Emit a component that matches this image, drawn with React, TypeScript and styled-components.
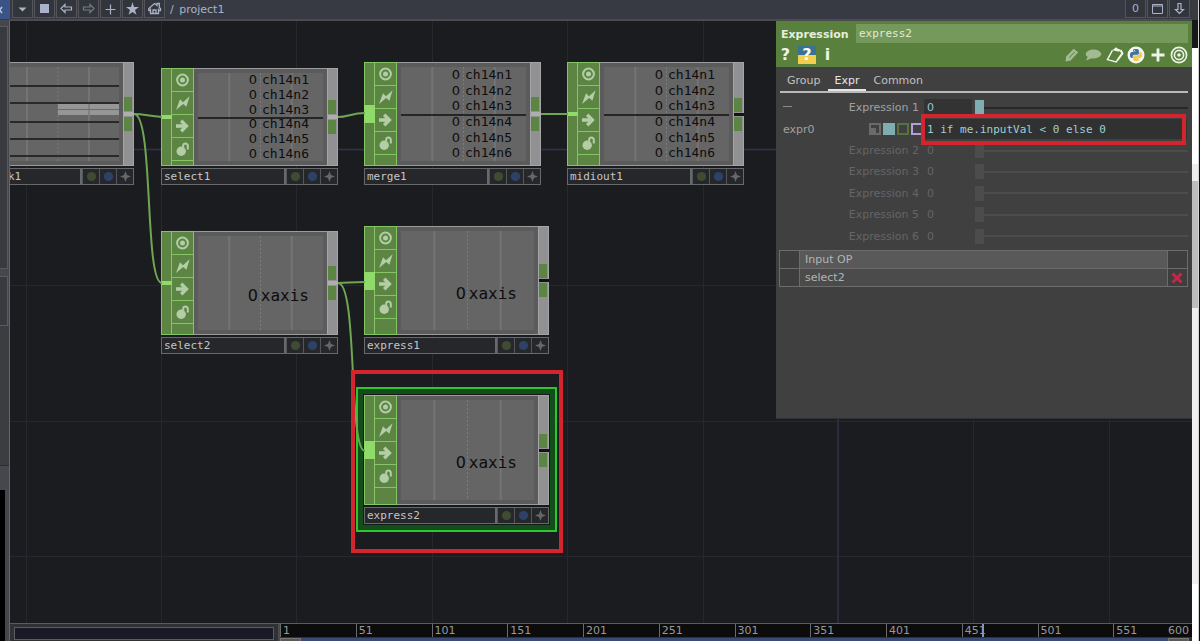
import React from "react";
import styled, { createGlobalStyle, css } from "styled-components";

const MONO = '"DejaVu Sans Mono", "Liberation Mono", monospace';
const SANS = '"DejaVu Sans", "Liberation Sans", sans-serif';

const GlobalStyle = createGlobalStyle`
  * { box-sizing: border-box; }
  body { margin: 0; background: #1b1c20; font-family: ${SANS}; font-size: 11px; }
  button, input { font: inherit; color: inherit; margin: 0; padding: 0; border: 0; border-radius: 0; background: none; outline: none; min-width: 0; }
  svg { display: block; }
`;

const Shell = styled.div`
  display: flex;
  height: 100vh;
  overflow: hidden;
`;

/* ---------- left pane edge ---------- */

const LeftEdge = styled.aside`
  flex: 0 0 10px;
  display: flex;
  flex-direction: column;
  background: #46474c;
  border-right: 1px solid #65666a;
`;

const EdgeTab = styled.button`
  height: 20px;
  margin-right: -1px;
  background: #3b5488;
  border-bottom: 1px solid #2b3c60;
  svg { width: 9px; height: 16px; }
`;

const EdgePanel = styled.div<{ $height: number; $gap: number }>`
  height: ${(p) => p.$height}px;
  margin-top: ${(p) => p.$gap}px;
  margin-right: 1px;
  background: #383a40;
  border: solid #595a5f;
  border-width: 1px 1px 1px 0;
`;

const EdgeFill = styled.div`
  height: 140px;
  background: #3c3d41;
  border-bottom: 1px solid #2c2d30;
`;

const EdgeBlank = styled.div`
  flex: 1;
  margin: 24px 4px 0 0;
  background: #000;
`;

/* ---------- main column ---------- */

const Main = styled.main`
  flex: 1;
  min-width: 0;
  display: flex;
  flex-direction: column;
`;

const Toolbar = styled.header`
  flex: 0 0 21px;
  display: flex;
  align-items: flex-start;
  gap: 1px;
  padding: 0 2px;
  background: #373a43;
  border-bottom: 2px solid #4b4c50;
  color: #a9b2c8;
`;

const ToolButton = styled.button<{ $dim?: boolean }>`
  width: 21px;
  height: 18px;
  display: flex;
  align-items: center;
  justify-content: center;
  background: #33353d;
  border: 1px solid #54555b;
  border-top: 0;
  color: ${(p) => (p.$dim ? "#747a88" : "#a9b2c8")};
  svg { width: 15px; height: 15px; }
`;

const Path = styled.nav`
  flex: 1;
  padding-left: 4px;
  line-height: 19px;
  a { color: inherit; text-decoration: none; margin-left: 2px; }
`;

/* ---------- network canvas ---------- */

const Stage = styled.section`
  position: relative;
  flex: 1;
  min-height: 0;
  overflow: hidden;
  background: #1b1c20;
`;

const Layer = styled.svg`
  position: absolute;
  inset: 0;
  width: 100%;
  height: 100%;
  pointer-events: none;
`;

const NodeFrame = styled.article<{ $x: number; $y: number; $w: number }>`
  position: absolute;
  left: ${(p) => p.$x}px;
  top: ${(p) => p.$y}px;
  width: ${(p) => p.$w}px;
`;

const Selection = styled.div`
  position: absolute;
  inset: -8px;
  background: #134d19;
  border: 2px solid #2cc62f;
  &::after {
    content: "";
    position: absolute;
    inset: 5px;
    background: #15191a;
  }
`;

const NodeBody = styled.div<{ $height: number }>`
  position: relative;
  display: flex;
  height: ${(p) => p.$height}px;
  background: #5b5b5b;
  border: 1px solid #9b9b9b;
  border-width: 1px 0;
`;

const InputRail = styled.div<{ $h: number }>`
  width: 11px;
  margin: -1px 0;
  display: flex;
  align-items: center;
  background: #5c8543;
  border: 1px solid #83c663;
  &::before {
    content: "";
    flex: 1;
    height: ${(p) => p.$h}px;
    margin-right: -1px;
    margin-left: -1px;
    background: #90da69;
  }
`;

const FlagColumn = styled.div`
  width: 22px;
  margin: -1px 0;
  display: flex;
  flex-direction: column;
  background: #5c8543;
  border: solid #83c663;
  border-width: 1px 1px 1px 0;
  overflow: hidden;
`;

const Flag = styled.button`
  flex: 0 0 23px;
  display: flex;
  align-items: center;
  justify-content: center;
  border-bottom: 1px solid #83c663;
  color: #b3cda6;
  svg { width: 16px; height: 16px; }
`;

const Screen = styled.div`
  position: relative;
  flex: 1;
  margin: 4px;
  display: flex;
  flex-direction: column;
  background: #656565;
  svg { position: absolute; inset: 0; width: 100%; height: 100%; }
`;

const Channel = styled.div<{ $large?: boolean; $wide?: boolean }>`
  position: relative;
  flex: 1;
  display: flex;
  align-items: center;
  justify-content: flex-end;
  gap: 5px;
  padding-right: ${(p) => (p.$wide ? 17 : 14)}px;
  color: #0d0d0d;
  font: 13px/14px ${MONO};
  ${(p) =>
    p.$large &&
    css`
      padding-top: 26px;
      font-size: 16px;
      gap: 3px;
    `}
`;

const Value = styled.span`
  font-family: ${SANS};
`;

const OutputRail = styled.div`
  width: 11px;
  margin: -1px 0;
  display: flex;
  flex-direction: column;
  justify-content: center;
  background: #919193;
  border: 1px solid #a5a5a7;
`;

const Port = styled.div`
  height: 14px;
  width: 8px;
  background: #5c8543;
`;

const PortGap = styled.div<{ $open?: boolean }>`
  height: ${(p) => (p.$open ? 3 : 4)}px;
  margin: 1px -1px 1px 0;
  background: ${(p) => (p.$open ? "#121314" : "#aeaeb0")};
`;

const NodeFooter = styled.div`
  position: relative;
  display: flex;
  margin-top: 2px;
  height: 17px;
  background: #26272a;
  border: 1px solid #68696b;
`;

const NodeName = styled.div`
  flex: 1;
  padding-left: 2px;
  line-height: 16px;
  font-family: ${MONO};
  color: #c6c6c6;
  border-right: 2px solid #68696b;
`;

const FooterCell = styled.button`
  width: 17px;
  display: flex;
  align-items: center;
  justify-content: center;
  border-left: 1px solid #55565a;
  svg { width: 11px; height: 11px; }
`;

const NodeMark = styled.div`
  position: absolute;
  left: 341px;
  top: 349px;
  width: 212px;
  height: 183px;
  border: 4px solid #d3252d;
`;

/* ---------- parameter panel ---------- */

const Panel = styled.section`
  position: absolute;
  top: 0;
  right: 0;
  width: 416px;
  height: 398px;
  background: #404040;
  border-bottom: 1px solid #2f3033;
`;

const PanelHead = styled.div`
  display: grid;
  grid-template-rows: 19px 24px;
  padding: 3px 4px 0;
  height: 46px;
  background: #5a803e;
`;

const HeadRow = styled.div`
  display: flex;
  align-items: center;
`;

const OpType = styled.label`
  width: 76px;
  padding: 2px 0 0 1px;
  font-weight: bold;
  color: #e4eedd;
`;

const OpName = styled.input`
  && {
    flex: 1;
    height: 19px;
    padding: 0 3px;
    background: #75995b;
    color: #e0ebd8;
    font-family: ${MONO};
  }
`;

const HeadTools = styled.div<{ $gap: number }>`
  display: flex;
  align-items: center;
  gap: ${(p) => p.$gap}px;
`;

const HeadButton = styled.button<{ $w: number; $dim?: boolean }>`
  && {
    width: ${(p) => p.$w}px;
    height: 20px;
    display: flex;
    align-items: center;
    justify-content: center;
    color: #edf5e8;
    opacity: ${(p) => (p.$dim ? 0.5 : 1)};
    font: bold 16px/20px ${SANS};
  }
  svg { flex: none; }
`;

const Spacer = styled.div`
  flex: 1;
`;

const Tabs = styled.div`
  display: flex;
  align-items: flex-end;
  height: 26px;
  margin: 0 4px;
  border-bottom: 2px solid #b9b9b9;
`;

const Tab = styled.button<{ $on?: boolean }>`
  && {
    height: 19px;
    padding: 0 7px;
    line-height: 17px;
    color: ${(p) => (p.$on ? "#e6e6e6" : "#c0c0c0")};
    border-bottom: 2px solid ${(p) => (p.$on ? "#e6e6e6" : "transparent")};
  }
`;

const Params = styled.div`
  display: flex;
  flex-direction: column;
  height: 150px;
  margin: 4px 4px 0;
`;

const ParamRow = styled.div<{ $off?: boolean }>`
  flex: 1;
  display: grid;
  grid-template-columns: 139px 1fr;
  column-gap: 5px;
  align-items: center;
  color: ${(p) => (p.$off ? "#656565" : "#a0a0a0")};
`;

const LabelCell = styled.div`
  display: flex;
  align-items: center;
  justify-content: space-between;
  padding-left: 3px;
`;

const Collapse = styled.button`
  width: 9px;
  height: 11px;
  svg { width: 9px; height: 11px; }
`;

const ParamLabel = styled.label`
  margin-left: auto;
`;

const ValueCell = styled.div`
  display: flex;
  align-items: center;
  height: 20px;
`;

const NumberField = styled.input<{ $off?: boolean }>`
  && {
    width: 48px;
    height: 18px;
    margin-right: 3px;
    padding-left: 3px;
    background: ${(p) => (p.$off ? "transparent" : "#333333")};
    color: ${(p) => (p.$off ? "#656565" : "#96c5c8")};
  }
`;

const Slider = styled.input<{ $off?: boolean }>`
  && {
    flex: 1;
    height: 15px;
    appearance: none;
    background: linear-gradient(${(p) => (p.$off ? "#4c4c4c" : "#272727")}, ${(p) => (p.$off ? "#4c4c4c" : "#272727")}) center / 100% 2px no-repeat;
  }
  &::-webkit-slider-thumb {
    appearance: none;
    width: 9px;
    height: 15px;
    border-radius: 0;
    background: ${(p) => (p.$off ? "#4c4c4c" : "#7faeb2")};
  }
`;

const Modes = styled.div`
  display: flex;
  gap: 2px;
  margin-right: -4px;
`;

const Mode = styled.button<{ $line: string; $fill: string }>`
  && {
    width: 12px;
    height: 12px;
    border: 2px solid ${(p) => p.$line};
    background: ${(p) => p.$fill};
  }
`;

const ExpressionCell = styled.div`
  position: relative;
  display: flex;
`;

const ExpressionInput = styled.input`
  && {
    flex: 1;
    height: 20px;
    margin-right: 1px;
    padding-left: 3px;
    background: #313131;
    color: #9fcfd0;
    font-family: ${MONO};
  }
`;

const ExpressionMark = styled.div`
  position: absolute;
  inset: -5px 2px -6px -3px;
  border: 4px solid #d3252d;
  pointer-events: none;
`;

const InputTable = styled.table`
  width: calc(100% - 7px);
  margin: 3px 4px 0 3px;
  border-collapse: collapse;
  table-layout: fixed;
  color: #b4b4b4;
  th, td {
    height: 18px;
    padding: 0;
    border: 1px solid #6c6c6c;
    font-weight: normal;
    text-align: left;
    line-height: 16px;
    background: #3e3e3e;
  }
  th:nth-child(1) { width: 20px; }
  th:nth-child(3) { width: 20px; }
  th:nth-child(2) { padding-left: 5px; background: #595959; }
  td:nth-child(2) { padding-left: 5px; background: #4b4b4b; }
`;

const RemoveButton = styled.button`
  display: block;
  width: 18px;
  height: 16px;
  svg { width: 18px; height: 16px; }
`;

/* ---------- timeline ---------- */

const Timeline = styled.footer`
  flex: 0 0 18px;
  display: flex;
  overflow: hidden;
  background: #303135;
  border-top: 1px solid #5a5b5e;
`;

const TimeInfo = styled.div`
  flex: 0 0 270px;
  padding: 3px 4px 0;
  border-right: 2px solid #4a4b4f;
`;

const TimeInfoBox = styled.div`
  height: 13px;
  background: #1a1a26;
  border: 1px solid #5c5d61;
`;

const TimeBody = styled.div`
  flex: 1;
  min-width: 0;
  display: flex;
  flex-direction: column;
`;

const Ruler = styled.div`
  position: relative;
  display: flex;
  height: 13px;
  background: #0c0c0d;
  color: #98989a;
  line-height: 13px;
`;

const Tick = styled.div`
  flex: 50 0 0;
  padding-left: 2px;
  border-left: 1px solid #6b6b6d;
  &:last-of-type {
    display: flex;
    justify-content: space-between;
    padding-right: 3px;
  }
`;

const Playhead = styled.div`
  position: absolute;
  left: 77%;
  top: 0;
  width: 2px;
  height: 13px;
  background: #7f96bd;
`;

const RangeBar = styled.div`
  display: flex;
  justify-content: space-between;
  height: 4px;
  margin: 1px 3px 0 0;
  background: #384a75;
`;

const RangeHandle = styled.button`
  && {
    width: 21px;
    height: 4px;
    background: #5a5a5a;
    border: 1px solid #77777a;
    border-bottom: 0;
  }
`;

/* ---------- window behind, right side ---------- */

const RightEdge = styled.aside`
  flex: 0 0 8px;
  display: flex;
  flex-direction: column;
  border-right: 1px solid #0a0a0a;
  background: #f4f4f4;
`;

const EdgeBlock = styled.div<{ $h: number; $c: string }>`
  height: ${(p) => p.$h}px;
  background: ${(p) => p.$c};
  border-right: 1px solid #d4d4d4;
`;

/* ---------- drawings ---------- */

const TargetIcon = () => (
  <svg viewBox="0 0 16 16" fill="none" stroke="currentColor">
    <circle cx="7.5" cy="8" r="5.4" strokeWidth="2" />
    <circle cx="7.5" cy="8" r="2.5" fill="currentColor" stroke="none" />
  </svg>
);
const BoltIcon = () => (
  <svg viewBox="0 0 16 16" fill="currentColor">
    <path d="M14.6 1.2 11.4 11.8 8.2 9 1 15 5 4.200 8 7.200z" />
  </svg>
);
const ArrowIcon = () => (
  <svg viewBox="0 0 16 16" fill="none" stroke="currentColor">
    <path d="M1 8h10" strokeWidth="3.600" />
    <path d="M6.200 2.800 11.400 8l-5.200 5.200" strokeWidth="3.400" />
  </svg>
);
const BombIcon = () => (
  <svg viewBox="0 0 16 16" fill="none" stroke="currentColor">
    <circle cx="6.2" cy="10.2" r="4.7" fill="currentColor" stroke="none" />
    <path d="M8.2 6.600V4.800a2.300 2.300 0 0 1 4.600 0v3.800" strokeWidth="2" />
  </svg>
);
const DotIcon = ({ color }: { color: string }) => (
  <svg viewBox="0 0 11 11">
    <circle cx="5.5" cy="5.5" r="4.6" fill={color} />
  </svg>
);
const SparkIcon = () => (
  <svg viewBox="0 0 11 11" fill="#66676a">
    <path d="M5.5 0 7 4 11 5.500 7 7 5.500 11 4 7 0 5.500 4 4z" />
  </svg>
);

const PY_TOP =
  "M14.25.18l.9.2.73.26.59.3.45.32.34.34.25.34.16.33.1.3.04.26.02.2-.01.13V8.5l-.05.63-.13.55-.21.46-.26.38-.3.31-.33.25-.35.19-.35.14-.33.1-.3.07-.26.04-.21.02H8.77l-.69.05-.59.14-.5.22-.41.27-.33.32-.27.35-.2.36-.15.37-.1.35-.07.32-.04.27-.02.21v3.06H3.17l-.21-.03-.28-.07-.32-.12-.35-.18-.36-.26-.36-.36-.35-.46-.32-.59-.28-.73-.21-.88-.14-1.05-.05-1.23.06-1.22.16-1.04.24-.87.32-.71.36-.57.4-.44.42-.33.42-.24.4-.16.36-.1.32-.05.24-.01h.16l.06.01h8.16v-.83H6.18l-.01-2.75-.02-.37.05-.34.11-.31.17-.28.25-.26.31-.23.38-.2.44-.18.51-.15.58-.12.64-.1.71-.06.77-.04.84-.02 1.27.05zm-6.3 1.98l-.23.33-.08.41.08.41.23.34.33.22.41.09.41-.09.33-.22.23-.34.08-.41-.08-.41-.23-.33-.33-.22-.41-.09-.41.09z";
const PY_BOTTOM =
  "M21.1 6.11l.28.06.32.12.35.18.36.27.36.35.35.47.32.59.28.73.21.88.14 1.04.05 1.23-.06 1.23-.16 1.04-.24.86-.32.71-.36.57-.4.45-.42.33-.42.24-.4.16-.36.09-.32.05-.24.02-.16-.01h-8.22v.82h5.84l.01 2.76.02.36-.05.34-.11.31-.17.29-.25.25-.31.24-.38.2-.44.17-.51.15-.58.13-.64.09-.71.07-.77.04-.84.01-1.27-.04-1.07-.14-.9-.2-.73-.25-.59-.3-.45-.33-.34-.34-.25-.34-.16-.33-.1-.3-.04-.25-.02-.2.01-.13v-5.34l.05-.64.13-.54.21-.46.26-.38.3-.32.33-.24.35-.2.35-.14.33-.1.3-.06.26-.04.21-.02.13-.01h5.84l.69-.05.59-.14.5-.21.41-.28.33-.32.27-.35.2-.36.15-.36.1-.35.07-.32.04-.28.02-.21V6.07h2.09l.14.01z";

const PythonIcon = () => (
  <svg width="18" height="18" viewBox="0 0 36 36">
    <circle cx="18" cy="18" r="17" fill="#f3f6f0" />
    <g transform="translate(6 6)">
      <path d={PY_TOP} fill="#3d74a5" />
      <path d={PY_BOTTOM} fill="#f2cb4c" />
    </g>
  </svg>
);

const PythonHelp = styled.button`
  && {
    width: 18px;
    height: 18px;
    font: bold 16px/18px ${SANS};
    color: #ffffff;
    background: linear-gradient(#3a7391 50%, #f3cf4f 50%);
  }
`;

/* ---------- nodes ---------- */

type NodeProps = {
  name: string;
  x: number;
  y: number;
  wide?: boolean;
  h: number;
  channels: string[];
  large?: boolean;
  multi?: boolean;
  open?: boolean;
  selected?: boolean;
};

const Outputs = ({ open }: { open?: boolean }) => (
  <OutputRail>
    <Port />
    <PortGap $open={open} />
    <Port />
  </OutputRail>
);

const FooterCells = () => (
  <>
    <FooterCell aria-label="Viewer"><DotIcon color="#3f4c33" /></FooterCell>
    <FooterCell aria-label="Display"><DotIcon color="#2d4266" /></FooterCell>
    <FooterCell aria-label="Activate"><SparkIcon /></FooterCell>
  </>
);

const OpNode = ({ name, x, y, wide, h, channels, large, multi, open, selected }: NodeProps) => (
  <NodeFrame $x={x} $y={y} $w={wide ? 185 : 177}>
    {selected && <Selection />}
    <NodeBody $height={h}>
      <InputRail $h={multi ? 18 : 4} />
      <FlagColumn>
        <Flag aria-label="Viewer active"><TargetIcon /></Flag>
        <Flag aria-label="Cooking"><BoltIcon /></Flag>
        <Flag aria-label="Bypass"><ArrowIcon /></Flag>
        <Flag aria-label="Lock"><BombIcon /></Flag>
      </FlagColumn>
      <Screen>
        <svg>
          <line x1="25%" x2="25%" y1="0" y2="100%" stroke="#747474" strokeWidth="2" />
          <line x1="50%" x2="50%" y1="0" y2="100%" stroke="#7c7c7c" strokeDasharray="2 2" />
          <line x1="75%" x2="75%" y1="0" y2="100%" stroke="#747474" strokeWidth="2" />
          {!large && <line x1="0" x2="100%" y1="51%" y2="51%" stroke="#111" strokeWidth="1.5" />}
        </svg>
        {channels.map((c) => (
          <Channel key={c} $large={large} $wide={wide}>
            <Value>0</Value>
            <span>{c}</span>
          </Channel>
        ))}
      </Screen>
      <Outputs open={open} />
    </NodeBody>
    <NodeFooter>
      <NodeName>{name}</NodeName>
      <FooterCells />
    </NodeFooter>
  </NodeFrame>
);

const SourceName = styled(NodeName)`
  padding-left: 50px;
`;

const SourceNode = () => (
  <NodeFrame $x={-53} $y={41} $w={177}>
    <NodeBody $height={104}>
      <Screen>
        <svg>
          <line x1="66" x2="66" y1="0" y2="100%" stroke="#747474" strokeWidth="2" />
          <line x1="97" x2="97" y1="0" y2="100%" stroke="#7c7c7c" strokeDasharray="2 2" />
          <line x1="128" x2="128" y1="0" y2="100%" stroke="#747474" strokeWidth="2" />
          {[19, 36, 55, 72, 89].map((v) => (
            <line key={v} x1="0" x2="100%" y1={v} y2={v} stroke="#161616" strokeWidth="1.5" />
          ))}
          <rect x="97" y="37" width="65" height="11" fill="#969696" />
          <path d="M97 42.500h65M128 37v11" stroke="#6c6c6c" />
        </svg>
      </Screen>
      <Outputs />
    </NodeBody>
    <NodeFooter>
      <SourceName>k1</SourceName>
      <FooterCells />
    </NodeFooter>
  </NodeFrame>
);

const MIDI = ["ch14n1", "ch14n2", "ch14n3", "ch14n4", "ch14n5", "ch14n6"];

const Network = () => (
  <>
    <Layer>
      {[16, 151, 286, 422, 557, 693, 963, 1099].map((x) => (
        <line key={x} x1={x + 0.5} x2={x + 0.5} y1="0" y2="100%" stroke="#27282e" />
      ))}
      {[264, 400, 535].map((y) => (
        <line key={y} x1="0" x2="100%" y1={y + 0.5} y2={y + 0.5} stroke="#27282e" />
      ))}
      <path d="M0 128.5H1182M828 0V620" stroke="#30304f" strokeWidth="1.5" />
    </Layer>

    <SourceNode />
    <OpNode name="select1" x={151} y={47} h={98} channels={MIDI} />
    <OpNode name="merge1" x={354} y={41} h={104} channels={MIDI} multi />
    <OpNode name="midiout1" x={557} y={41} h={104} channels={MIDI} open />
    <OpNode name="select2" x={151} y={210} h={104} channels={["xaxis"]} large />
    <OpNode name="express1" x={354} y={205} h={109} channels={["xaxis"]} wide large multi open />
    <OpNode name="express2" x={354} y={374} h={110} channels={["xaxis"]} wide large multi open selected />

    <Layer fill="none" stroke="#6fa653" strokeWidth="2">
      <path d="M124 93c10 0 14 2 28 3" />
      <path d="M124 93c20 0 10 169 28 169" />
      <path d="M328 96c10 0 14-4 27-4" />
      <path d="M531 93h27" />
      <path d="M328 262c10 0 14-1 27-1" />
      <path d="M328 262c20 0 10 168 27 168" />
    </Layer>
    <NodeMark />
  </>
);

/* ---------- parameters ---------- */

const ParameterPanel = () => (
  <Panel>
    <PanelHead>
      <HeadRow>
        <OpType htmlFor="op-name">Expression</OpType>
        <OpName id="op-name" defaultValue="express2" />
      </HeadRow>
      <HeadRow>
        <HeadTools $gap={7}>
          <HeadButton $w={11}>?</HeadButton>
          <PythonHelp>?</PythonHelp>
          <HeadButton $w={9}>i</HeadButton>
        </HeadTools>
        <Spacer />
        <HeadTools $gap={4}>
          <HeadButton $w={17} $dim aria-label="Edit">
            <svg width="16" height="16" viewBox="0 0 16 16" fill="currentColor">
              <path d="M1.600 14.400 2 9.800 9.600 1.800l4.600 3.400-7.600 8.400z" />
              <path d="M5.400 10.600 10.600 5" stroke="#5a803e" strokeWidth="1" />
            </svg>
          </HeadButton>
          <HeadButton $w={18} $dim aria-label="Comment">
            <svg width="18" height="16" viewBox="0 0 18 16" fill="currentColor">
              <ellipse cx="9.5" cy="7" rx="7.8" ry="4.4" />
              <path d="M4 9 2 13.5 8.5 11z" />
            </svg>
          </HeadButton>
          <HeadButton $w={17} aria-label="Copy parameters">
            <svg width="18" height="18" viewBox="0 0 18 18" fill="none" stroke="currentColor" strokeWidth="1.4">
              <path d="M6.400 4.400 1.400 13.600l8.800 2.400 6-8.600-1.400-3.400" />
              <path d="M6 4.200 8 3 10 1.200l1.800 1.600 2.600.6-1 2.400z" fill="currentColor" stroke="none" />
              <path d="M14.600 4.200 16.400 7.400 11.600 14" strokeWidth="2" />
            </svg>
          </HeadButton>
          <HeadButton $w={18} aria-label="Python"><PythonIcon /></HeadButton>
          <HeadButton $w={17} aria-label="Add">
            <svg width="14" height="14" viewBox="0 0 14 14" stroke="currentColor" strokeWidth="2.8">
              <path d="M7 .5v13M.5 7h13" />
            </svg>
          </HeadButton>
          <HeadButton $w={18} aria-label="Target">
            <svg width="18" height="18" viewBox="0 0 18 18" fill="none" stroke="currentColor" strokeWidth="1.6">
              <circle cx="9" cy="9" r="7.6" />
              <circle cx="9" cy="9" r="4.6" />
              <circle cx="9" cy="9" r="1.8" fill="currentColor" stroke="none" />
            </svg>
          </HeadButton>
        </HeadTools>
      </HeadRow>
    </PanelHead>

    <Tabs>
      <Tab>Group</Tab>
      <Tab $on>Expr</Tab>
      <Tab>Common</Tab>
    </Tabs>

    <Params>
      <ParamRow>
        <LabelCell>
          <Collapse aria-label="Collapse">
            <svg viewBox="0 0 9 11"><path d="M0 4.5h9" stroke="#8a8a8a" /></svg>
          </Collapse>
          <ParamLabel htmlFor="expr-1">Expression 1</ParamLabel>
        </LabelCell>
        <ValueCell>
          <NumberField id="expr-1" defaultValue="0" />
          <Slider type="range" defaultValue={0} aria-label="Expression 1 slider" />
        </ValueCell>
      </ParamRow>
      <ParamRow>
        <LabelCell>
          <label htmlFor="expr0">expr0</label>
          <Modes>
            <Mode $line="#6a6a6a" $fill="linear-gradient(#6a6a6a, #6a6a6a) left bottom / 5px 5px no-repeat #404040" aria-label="Constant" />
            <Mode $line="#7faeb2" $fill="#7faeb2" aria-label="Expression" />
            <Mode $line="#55733c" $fill="#404040" aria-label="Export" />
            <Mode $line="#b39fdc" $fill="#404040" aria-label="Bind" />
          </Modes>
        </LabelCell>
        <ExpressionCell>
          <ExpressionInput id="expr0" defaultValue="1 if me.inputVal < 0 else 0" />
          <ExpressionMark />
        </ExpressionCell>
      </ParamRow>
      {[2, 3, 4, 5, 6].map((n) => (
        <ParamRow key={n} $off>
          <LabelCell>
            <ParamLabel htmlFor={`expr-${n}`}>Expression {n}</ParamLabel>
          </LabelCell>
          <ValueCell>
            <NumberField id={`expr-${n}`} defaultValue="0" $off readOnly />
            <Slider type="range" defaultValue={0} $off aria-label={`Expression ${n} slider`} />
          </ValueCell>
        </ParamRow>
      ))}
    </Params>

    <InputTable>
      <thead>
        <tr><th /><th>Input OP</th><th /></tr>
      </thead>
      <tbody>
        <tr>
          <td />
          <td>select2</td>
          <td>
            <RemoveButton aria-label="Remove input">
              <svg viewBox="0 0 18 16" stroke="#c3284a" strokeWidth="3">
                <path d="M4.500 3.500l9 9M13.500 3.500l-9 9" />
              </svg>
            </RemoveButton>
          </td>
        </tr>
      </tbody>
    </InputTable>
  </Panel>
);

const FRAMES = [1, 51, 101, 151, 201, 251, 301, 351, 401, 451, 501, 551];

export default function App() {
  return (
    <Shell>
      <GlobalStyle />
      <LeftEdge>
        <EdgeTab aria-label="Close pane">
          <svg viewBox="0 0 9 16" stroke="#b9c4dc" strokeWidth="1.6" fill="none">
            <path d="M-3 5 2 11M2 5l-5 6" />
          </svg>
        </EdgeTab>
        <EdgePanel $height={243} $gap={6} />
        <EdgePanel $height={50} $gap={7} />
        <EdgeFill />
        <EdgeBlank />
      </LeftEdge>

      <Main>
        <Toolbar>
          <ToolButton aria-label="Pane menu">
            <svg viewBox="0 0 15 15" fill="currentColor"><path d="M3.500 6.500h8l-4 4z" /></svg>
          </ToolButton>
          <ToolButton aria-label="Stop">
            <svg viewBox="0 0 15 15" fill="currentColor"><path d="M3 3h9v9H3z" /></svg>
          </ToolButton>
          <ToolButton aria-label="Back">
            <svg viewBox="0 0 15 15" fill="none" stroke="currentColor" strokeWidth="1.2"><path d="M2 7.5 6 3.5v2.5h6.500v3H6v2.5z" /></svg>
          </ToolButton>
          <ToolButton $dim aria-label="Forward">
            <svg viewBox="0 0 15 15" fill="none" stroke="currentColor" strokeWidth="1.2"><path d="M13 7.5 9 3.5v2.5H2.500v3H9v2.5z" /></svg>
          </ToolButton>
          <ToolButton aria-label="Add">
            <svg viewBox="0 0 15 15" stroke="currentColor" strokeWidth="1.2"><path d="M7.5 3.5v10M2.5 8.5h10" /></svg>
          </ToolButton>
          <ToolButton aria-label="Bookmarks">
            <svg viewBox="0 0 15 15" fill="currentColor"><path d="M7.5 1.2 9 6h5l-4 3 1.5 4.8-4-2.9-4 2.9L5 9 1 6h5z" /></svg>
          </ToolButton>
          <ToolButton aria-label="Home">
            <svg viewBox="0 0 15 15" fill="none" stroke="currentColor" strokeWidth="1.3"><path d="M3.500 9.500H1.800V7.500L7.500 2.500l2.500 2V2.500h2.300v4l1.200 1v2h-2M3.500 7.500v5h8v-5M6 12.500V9h3v3.500" /></svg>
          </ToolButton>
          <Path>/ <a href="#project1">project1</a></Path>
          <ToolButton>0</ToolButton>
          <ToolButton aria-label="Maximize">
            <svg viewBox="0 0 15 15" fill="none" stroke="currentColor"><path d="M2.500 3.500h10v9h-10zM2.500 5h10" /></svg>
          </ToolButton>
          <ToolButton aria-label="Split pane">
            <svg viewBox="0 0 15 15" fill="none" stroke="currentColor" strokeWidth="1.2"><path d="M7.500 12.500 3.500 8.500H6v-6h3v6h2.500z" /></svg>
          </ToolButton>
        </Toolbar>

        <Stage>
          <Network />
          <ParameterPanel />
        </Stage>

        <Timeline>
          <TimeInfo><TimeInfoBox /></TimeInfo>
          <TimeBody>
            <Ruler>
              <Playhead />
              {FRAMES.map((f) => (
                <Tick key={f}>
                  <span>{f}</span>
                  {f === 551 && <span>600</span>}
                </Tick>
              ))}
            </Ruler>
            <RangeBar>
              <RangeHandle aria-label="Range start" />
              <RangeHandle aria-label="Range end" />
            </RangeBar>
          </TimeBody>
        </Timeline>
      </Main>

      <RightEdge>
        <EdgeBlock $h={20} $c="#3a3b40" />
        <EdgeBlock $h={28} $c="#17181a" />
        <EdgeBlock $h={116} $c="#ffffff" />
        <EdgeBlock $h={17} $c="#ececec" />
        <EdgeBlock $h={127} $c="#bdbdbd" />
        <EdgeBlock $h={276} $c="#f0eeee" />
        <EdgeBlock $h={57} $c="#ffffff" />
      </RightEdge>
    </Shell>
  );
}
